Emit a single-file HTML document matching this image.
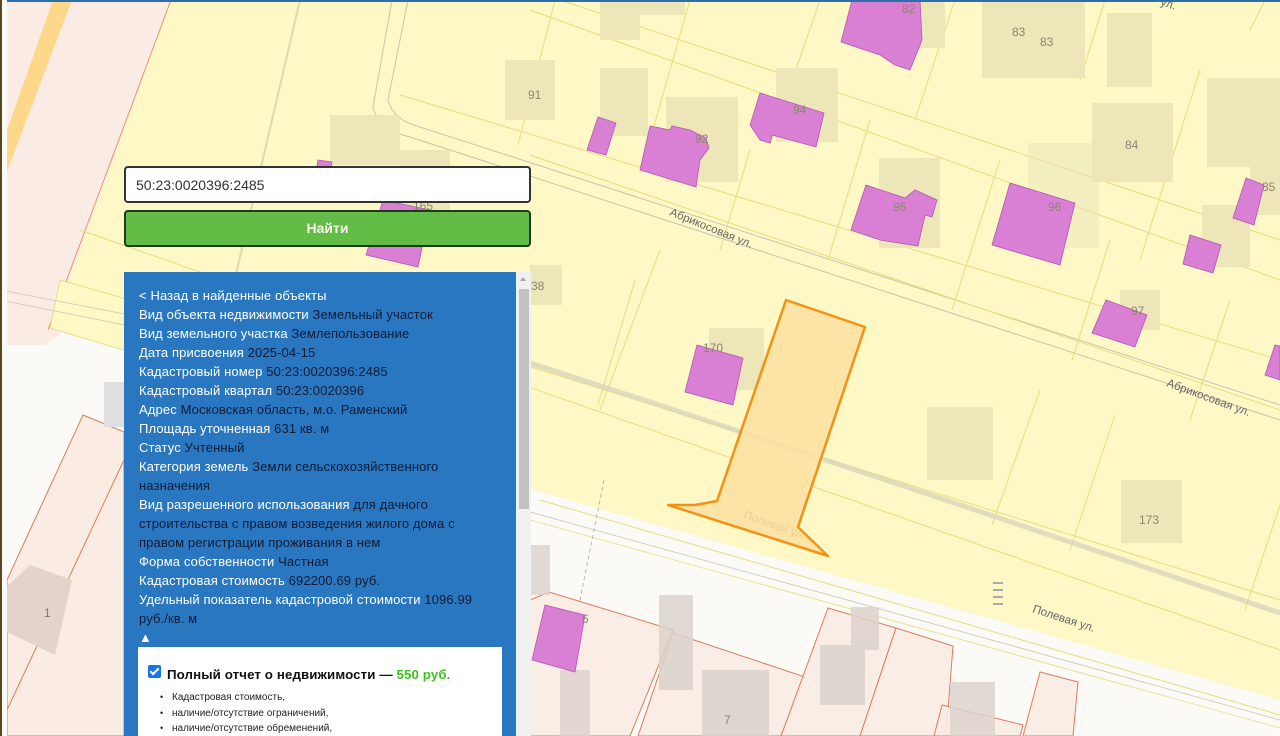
<!DOCTYPE html>
<html><head><meta charset="utf-8"><style>
*{margin:0;padding:0;box-sizing:border-box}
body{width:1280px;height:736px;overflow:hidden;position:relative;background:#fbfaf6;font-family:"Liberation Sans",Arial,sans-serif}
svg.map{position:absolute;left:0;top:0}
.inp{position:absolute;left:124px;top:166px;width:407px;height:37px;background:#fff;border:2px solid #333;border-radius:4px;font-size:14px;color:#333;padding:9px 10px;line-height:17px}
.btn{position:absolute;left:124px;top:210px;width:407px;height:37px;background:#63bc46;border:2px solid #1d3a1a;border-radius:4px;font-size:14px;font-weight:bold;text-align:center;line-height:33px;color:#f3f7f0}
.panel{position:absolute;left:124px;top:272px;width:392px;height:464px;background:#2a77c1;color:#fff;font-size:13px;letter-spacing:0.12px;line-height:19px;padding:14px 20px 0 15px;overflow:hidden}
.panel .v{color:#0d1b35}
.sb{position:absolute;left:516px;top:272px;width:15px;height:464px;background:#f0f0f0}
.sb .th{position:absolute;left:3px;top:17px;width:10px;height:220px;background:#c1c1c1}
.sb .ar{position:absolute;left:4px;top:5px;width:0;height:0;border-left:3.5px solid transparent;border-right:3.5px solid transparent;border-bottom:4px solid #a3a3a3}
.box{position:absolute;left:14px;top:375px;width:364px;height:100px;background:#fff;color:#111;letter-spacing:0}
.cb{position:absolute;left:10px;top:18px;width:13px;height:13px;background:#1a73e8;border-radius:2px}
.cb:after{content:"";position:absolute;left:4px;top:1px;width:3px;height:7px;border:solid #fff;border-width:0 2px 2px 0;transform:rotate(45deg)}
.ttl{position:absolute;left:29px;top:20px;font-size:13.3px;letter-spacing:0.1px;font-weight:bold;line-height:16px;white-space:nowrap}
.ttl span{color:#3cc21b}
.box ul{position:absolute;left:22px;top:43px;font-size:10px;line-height:15.5px;list-style:none;color:#222}
.box li:before{content:"•";position:absolute;left:0;font-size:9px}
.box li{padding-left:12px}
</style></head><body>
<svg class="map" width="1280" height="736" viewBox="0 0 1280 736">
<rect x="0" y="0" width="1280" height="736" fill="#fbfaf6"/>
<polygon points="160,0 1280,0 1280,700 540,492 130,352 50,300 110,120" fill="#fdf8c6"/>
<polygon points="7,0 171,0 62,300 60,335 45,345 7,345" fill="#faece4"/>
<line x1="171" y1="0" x2="48" y2="330" stroke="#e8946e" stroke-width="1"/>
<polygon points="53,0 72,0 0,190 0,150" fill="#fdd88a"/>
<polygon points="60,280 130,300 130,352 50,328" fill="#fdf8c6" stroke="#e8d870" stroke-width="0.8"/>
<line x1="0" y1="290" x2="130" y2="315" stroke="#c9c5b0" stroke-width="0.8"/>
<line x1="0" y1="300" x2="130" y2="326" stroke="#c9c5b0" stroke-width="0.8"/>
<polygon points="83,415 124,432 124,736 7,736 7,580" fill="#faebe3" stroke="#e07b5a" stroke-width="1"/>
<line x1="124" y1="460" x2="7" y2="710" stroke="#e07b5a" stroke-width="1"/>
<polygon points="3,590 30,565 72,580 55,655 3,630" fill="#e3d3cb"/>
<text x="44" y="617" font-size="12" fill="#777">1</text>
<rect x="104" y="382" width="20" height="45" fill="#e0dfe0"/>
<path d="M392,0 L373,107 Q378,130 410,137 L1280,420" fill="none" stroke="#c8c4ae" stroke-width="1"/>
<path d="M408,0 L388,100 Q393,120 420,127 L1280,405" fill="none" stroke="#c8c4ae" stroke-width="1"/>
<path d="M300,0 L230,300" stroke="#ded9b0" stroke-width="2"/>
<g stroke="#e9dc7a" stroke-width="1" fill="none">
<line x1="530" y1="155" x2="1280" y2="410"/>
<line x1="80" y1="230" x2="1280" y2="650"/>
<line x1="400" y1="95" x2="1280" y2="360"/>
<line x1="380" y1="320" x2="1280" y2="600"/>
<line x1="530" y1="10" x2="1280" y2="280"/>
<line x1="560" y1="0" x2="1280" y2="240"/>
<line x1="540" y1="500" x2="1280" y2="715"/>
<line x1="555" y1="0" x2="518" y2="145"/>
<line x1="690" y1="0" x2="650" y2="140"/>
<line x1="820" y1="0" x2="770" y2="145"/>
<line x1="955" y1="0" x2="915" y2="120"/>
<line x1="1105" y1="0" x2="1080" y2="80"/>
<line x1="1265" y1="0" x2="1250" y2="30"/>
<line x1="750" y1="150" x2="720" y2="250"/>
<line x1="870" y1="120" x2="828" y2="260"/>
<line x1="1000" y1="160" x2="952" y2="310"/>
<line x1="1200" y1="70" x2="1140" y2="260"/>
<line x1="1110" y1="240" x2="1072" y2="360"/>
<line x1="1230" y1="300" x2="1190" y2="420"/>
<line x1="660" y1="250" x2="600" y2="410"/>
<line x1="1040" y1="390" x2="992" y2="525"/>
<line x1="1115" y1="415" x2="1070" y2="550"/>
<line x1="1280" y1="505" x2="1245" y2="610"/>
<line x1="635" y1="280" x2="598" y2="405"/>
</g>
<path d="M530,363 Q830,460 1280,613" fill="none" stroke="#d8d5bc" stroke-width="5" opacity="0.8"/>
<line x1="530" y1="512" x2="1280" y2="720" stroke="#c8c4ae" stroke-width="0.8"/>
<line x1="530" y1="520" x2="1280" y2="728" stroke="#e9dc7a" stroke-width="0.8"/>
<line x1="604" y1="480" x2="554" y2="730" stroke="#aaa" stroke-width="0.8" stroke-dasharray="4,3"/>
<g fill="#ece6b9">
<rect x="505" y="60" width="50" height="60"/>
<rect x="600" y="0" width="40" height="40"/>
<rect x="600" y="68" width="48" height="68"/>
<rect x="666" y="97" width="72" height="85"/>
<rect x="776" y="68" width="62" height="74"/>
<rect x="879" y="158" width="61" height="90"/>
<rect x="982" y="0" width="103" height="78"/>
<rect x="1107" y="13" width="45" height="74"/>
<rect x="1092" y="103" width="81" height="79"/>
<rect x="1207" y="78" width="73" height="89"/>
<rect x="1202" y="205" width="48" height="62"/>
<rect x="1250" y="140" width="30" height="75"/>
<rect x="330" y="115" width="70" height="50"/>
<rect x="400" y="150" width="50" height="60"/>
<rect x="530" y="265" width="32" height="40"/>
<rect x="709" y="328" width="55" height="62"/>
<rect x="927" y="407" width="66" height="73"/>
<rect x="1121" y="480" width="61" height="63"/>
<rect x="1120" y="290" width="40" height="40"/>
<rect x="900" y="0" width="45" height="48"/>
<rect x="640" y="0" width="45" height="15"/>
</g>
<rect x="1028" y="143" width="71" height="105" fill="#ece6b9" opacity="0.5"/>
<g fill="#d980d4" stroke="#b456b0" stroke-width="0.8">
<polygon points="852,0 920,0 922,40 910,70 895,65 880,55 841,42"/>
<polygon points="598,117 616,123 606,155 587,150"/>
<polygon points="650,126 670,130 672,126 690,130 706,138 709,148 700,160 696,187 640,170"/>
<polygon points="760,93 824,113 816,147 772,135 770,143 760,140 750,125"/>
<polygon points="866,185 905,198 915,190 937,200 932,217 925,215 918,246 880,240 851,230"/>
<polygon points="1010,183 1075,203 1060,265 992,245"/>
<polygon points="1246,178 1264,185 1254,225 1233,218"/>
<polygon points="1190,235 1221,245 1213,273 1183,264"/>
<polygon points="1106,300 1147,315 1135,347 1092,333"/>
<polygon points="1275,345 1280,346 1280,380 1265,375"/>
<polygon points="697,345 743,358 733,405 685,392"/>
<polygon points="318,160 332,162 330,175 316,172"/>
<polygon points="383,200 430,210 418,267 366,255"/>
</g>
<g font-size="12" fill="#8a8770">
<text x="528" y="99">91</text><text x="902" y="13">82</text>
<text x="1012" y="36">83</text><text x="1040" y="46">83</text>
<text x="1125" y="149">84</text><text x="1262" y="191">85</text>
<text x="695" y="143">92</text><text x="793" y="114">94</text>
<text x="893" y="211">95</text><text x="1048" y="211">96</text>
<text x="1131" y="315">97</text><text x="531" y="290">38</text>
<text x="703" y="352">170</text><text x="1139" y="524">173</text>
<text x="413" y="210">165</text>
</g>
<g font-size="11.5" fill="#666">
<text x="669" y="215" transform="rotate(22 669 215)">Абрикосовая ул.</text>
<text x="1166" y="386" transform="rotate(20 1166 386)">Абрикосовая ул.</text>
<text x="743" y="518" transform="rotate(19 743 518)">Полевая ул.</text>
<text x="1032" y="612" transform="rotate(18 1032 612)">Полевая ул.</text>
<text x="1160" y="5" transform="rotate(18 1160 5)">ул.</text>
</g>
<g fill="#faebe3" fill-opacity="0.9" stroke="#e07b5a" stroke-width="1">
<polygon points="549,592 673,630 630,736 530,736 530,600"/>
<polygon points="673,633 805,677 781,736 638,736"/>
<polygon points="828,608 896,628 860,736 781,736"/>
<polygon points="896,628 953,646 946,736 860,736"/>
<polygon points="942,705 1023,725 1020,736 934,736"/>
<polygon points="1040,672 1078,682 1073,736 1023,736"/>
</g>
<g fill="#dcd2cd" opacity="0.85">
<rect x="851" y="607" width="28" height="43"/>
<rect x="659" y="595" width="34" height="95"/>
<rect x="702" y="670" width="67" height="66"/>
<rect x="820" y="645" width="45" height="60"/>
<rect x="530" y="545" width="20" height="50"/>
<rect x="560" y="670" width="30" height="66"/>
<rect x="950" y="682" width="45" height="54"/>
</g>
<polygon points="545,605 585,615 575,672 532,660" fill="#d980d4" stroke="#b456b0" stroke-width="0.8"/>
<text x="582" y="623" font-size="12" fill="#8a8770">6</text>
<text x="724" y="724" font-size="12" fill="#8a8770">7</text>
<polygon points="786,300 865,327 798,527 828,556 668,505 695,505 717,501" fill="#fde0a0" fill-opacity="0.85" stroke="#f39214" stroke-width="2.5" stroke-linejoin="round"/>
<g stroke="#aaa" stroke-width="2"><line x1="993" y1="583" x2="1003" y2="583"/><line x1="993" y1="590" x2="1003" y2="590"/><line x1="993" y1="597" x2="1003" y2="597"/><line x1="993" y1="604" x2="1003" y2="604"/></g>
<rect x="0" y="0" width="1280" height="2" fill="#2c6fab"/>
<rect x="0" y="0" width="2" height="736" fill="#5a4720"/>
<rect x="2" y="0" width="5" height="736" fill="#fbfaf6"/>
</svg>
<div class="inp">50:23:0020396:2485</div>
<div class="btn">Найти</div>
<div class="panel">
<div>&lt; Назад в найденные объекты</div>
<div>Вид объекта недвижимости <span class="v">Земельный участок</span></div>
<div>Вид земельного участка <span class="v">Землепользование</span></div>
<div>Дата присвоения <span class="v">2025-04-15</span></div>
<div>Кадастровый номер <span class="v">50:23:0020396:2485</span></div>
<div>Кадастровый квартал <span class="v">50:23:0020396</span></div>
<div>Адрес <span class="v">Московская область, м.о. Раменский</span></div>
<div>Площадь уточненная <span class="v">631 кв. м</span></div>
<div>Статус <span class="v">Учтенный</span></div>
<div>Категория земель <span class="v">Земли сельскохозяйственного<br>назначения</span></div>
<div>Вид разрешенного использования <span class="v">для дачного<br>строительства с правом возведения жилого дома с<br>правом регистрации проживания в нем</span></div>
<div>Форма собственности <span class="v">Частная</span></div>
<div>Кадастровая стоимость <span class="v">692200.69 руб.</span></div>
<div>Удельный показатель кадастровой стоимости <span class="v">1096.99<br>руб./кв. м</span></div>
<div>▲</div>
<div class="box">
<div class="cb"></div>
<div class="ttl">Полный отчет о недвижимости — <span>550 руб.</span></div>
<ul><li>Кадастровая стоимость,</li><li>наличие/отсутствие ограничений,</li><li>наличие/отсутствие обременений,</li></ul>
</div>
</div>
<div class="sb"><div class="ar"></div><div class="th"></div></div>
</body></html>
